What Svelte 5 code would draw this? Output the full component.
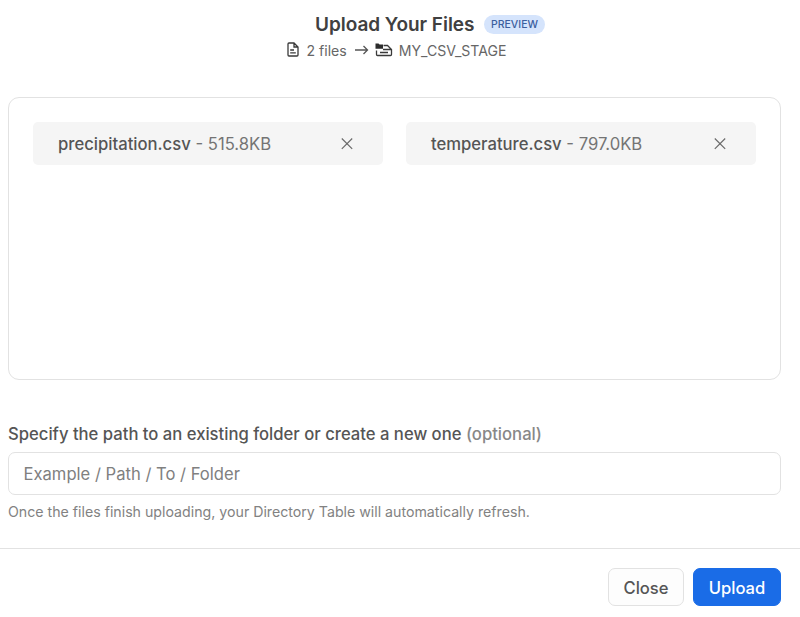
<script>
  const files = [
    { name: 'precipitation.csv', size: '515.8KB' },
    { name: 'temperature.csv', size: '797.0KB' }
  ];
</script>

<div class="dialog">
  <header>
    <div class="title"><h1>Upload Your Files</h1><span class="badge">PREVIEW</span></div>
    <div class="sub">
      <svg class="doc" width="12" height="15" viewBox="0 0 12 15" fill="none" stroke="#3a3a3a" stroke-width="1.3"><path d="M2 1h5l4 4v8a1 1 0 0 1-1 1H2a1 1 0 0 1-1-1V2a1 1 0 0 1 1-1zM7 1v4h4M3.2 8h3.8M3.2 10.8h5.6" /></svg>
      <span class="count">2 files</span>
      <svg class="arrow" width="14" height="10" viewBox="0 0 14 10" fill="none" stroke="#555" stroke-width="1.3"><path d="M0 5h12.5M8.5 1l4 4-4 4" /></svg>
      <svg class="stage" width="18" height="14" viewBox="0 0 18 14" fill="none" stroke="#3a3a3a" stroke-width="1.3"><path d="M.5.5h3l1 1H8v4.3H.5z" fill="#2c2c2c" stroke="none" /><path d="M8.5 2.5h4l4 4v5a1 1 0 0 1-1 1h-13a1 1 0 0 1-1-1V7.5M8 6.5h8.5M5 9.5h8" /></svg>
      <span class="name">MY_CSV_STAGE</span>
    </div>
  </header>
  <section class="drop">
    {#each files as f}
      <div class="file">
        <span class="label"><b>{f.name}</b> - {f.size}</span>
        <svg width="12" height="12" viewBox="0 0 12 12" fill="none" stroke="#6b6b6b" stroke-width="1.2"><path d="M.8.5l10.4 10.4M11.2.5L.8 10.9" /></svg>
      </div>
    {/each}
  </section>
  <label for="path">Specify the path to an existing folder or create a new one <span>(optional)</span></label>
  <input id="path" placeholder="Example / Path / To / Folder" />
  <p>Once the files finish uploading, your Directory Table will automatically refresh.</p>
  <footer>
    <button>Close</button>
    <button class="primary">Upload</button>
  </footer>
</div>

<style>
  :global(body) { background: #fff; overflow: hidden; }
  .dialog { box-sizing: border-box; width: 800px; height: 617px; font-family: Inter, "Liberation Sans", sans-serif; color: #484848; display: flex; flex-direction: column; }
  header { height: 97px; flex: none; }
  .title { display: flex; align-items: center; height: 24px; margin: 12px 0 0 315px; }
  h1 { margin: 0; padding-top: 1px; font-size: 19px; font-weight: 600; line-height: 24px; letter-spacing: -.04px; color: #404040; white-space: nowrap; }
  .badge { margin-left: 9.5px; height: 19px; line-height: 20px; padding: 0 7px; border-radius: 10px; background: #d5e4fc; color: #3c5f9f; font-size: 10.5px; font-weight: 500; }
  .sub { display: flex; align-items: center; height: 20px; margin: 4px 0 0 287px; font-size: 14.1px; color: #666; white-space: nowrap; }
  .doc { margin-top: -1px; }
  .count { margin-left: 7.5px; }
  .arrow { margin-left: 8px; }
  .stage { margin: -1px 0 0 6.5px; }
  .name { margin-left: 5.5px; }
  .drop { box-sizing: border-box; flex: none; width: 773px; height: 283px; margin-left: 8px; border: 1px solid #e2e2e2; border-radius: 11px; padding: 24px; display: flex; align-items: flex-start; gap: 23px; }
  .file { box-sizing: border-box; width: 350px; height: 43px; border-radius: 5px; background: #f5f5f5; display: flex; align-items: center; justify-content: space-between; padding: 0 30px 0 25px; font-size: 16.65px; color: #747474; }
  .label { white-space: nowrap; padding-top: 1px; }
  b { font-weight: 500; color: #555; }
  label { margin: 43px 0 0 8px; line-height: 22px; font-size: 16.65px; font-weight: 500; color: #555; white-space: nowrap; }
  label span { color: #888; }
  input { box-sizing: border-box; width: 773px; height: 43px; flex: none; margin: 7px 0 0 8px; padding: 0 14.5px; border: 1px solid #e2e2e2; border-radius: 7px; font: 16.6px Inter, sans-serif; outline: none; }
  input::placeholder { color: #808080; opacity: 1; }
  p { margin: 7px 0 0 8px; line-height: 20px; font-size: 14.18px; color: #828282; white-space: nowrap; }
  footer { box-sizing: border-box; border-top: 1px solid #e2e2e2; margin-top: 26px; flex: 1; display: flex; justify-content: flex-end; gap: 9px; padding: 19px 19px 0 0; }
  button { box-sizing: border-box; width: 76px; height: 38px; padding: 1px 0 0; border: 1px solid #e2e2e2; border-radius: 7px; background: #fdfdfd; color: #555; font: 500 16.6px Inter, sans-serif; }
  .primary { width: 88px; background: #1a6ce7; border-color: #1a6ce7; color: #fff; }
</style>
